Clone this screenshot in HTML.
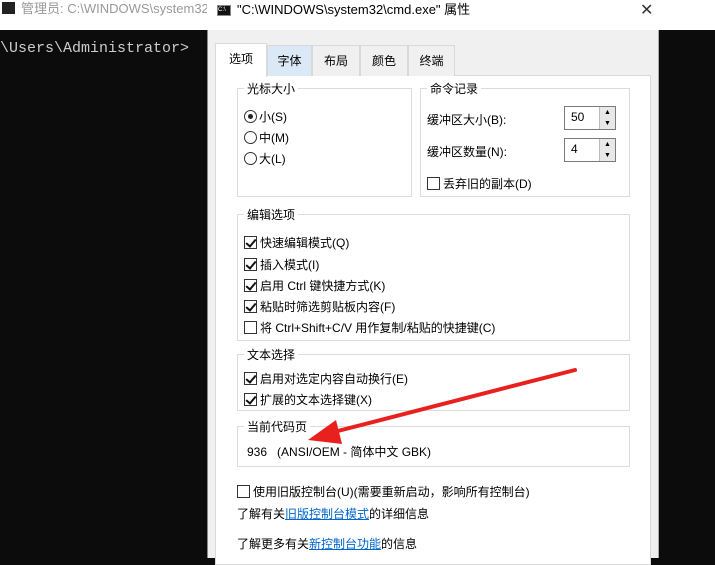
<!DOCTYPE html><html><head><meta charset="utf-8"><style>
*{margin:0;padding:0;box-sizing:border-box}
body{width:715px;height:558px;overflow:hidden;position:relative;background:#0c0c0c;font-family:"Liberation Sans","Noto Sans CJK SC",sans-serif;font-size:12px;color:#000}
.a{position:absolute;white-space:nowrap}
.gb{position:absolute;border:1px solid #dcdcdc}
.gl{position:absolute;top:-9px;left:6px;background:#fff;padding:0 3px;font-size:12px}
.cb{display:inline-block;width:13px;height:13px;border:1px solid #333;vertical-align:-2px;margin-right:3px;background:#fff;position:relative}
.cb.k:after{content:"";position:absolute;left:3px;top:0px;width:4px;height:8px;border:solid #111;border-width:0 2px 2px 0;transform:rotate(40deg)}
.rb{display:inline-block;width:13px;height:13px;border:1px solid #333;border-radius:50%;vertical-align:-2px;margin-right:2px;background:#fff;position:relative}
.rb.k:after{content:"";position:absolute;left:3px;top:3px;width:5px;height:5px;border-radius:50%;background:#222}
.tab{position:absolute;top:45px;height:31px;border:1px solid #d9d9d9;border-bottom:none;background:#f0f0f0;padding:6px 0;text-align:center;font-size:12px}
.sp{position:absolute;width:52px;height:24px;border:1px solid #7a7a7a;background:#fff;padding:3px 6px}
.sp i{position:absolute;right:0;width:16px;height:11px;background:#e8e8e8;border-left:1px solid #bbb;font-style:normal;font-size:7px;text-align:center;line-height:11px}
a{color:#0066cc;text-decoration:underline}
</style></head><body>
<div class="a" style="left:0;top:0;width:715px;height:30px;background:#fff"></div>
<div class="a" style="left:2px;top:2px;width:13px;height:12px;background:#222"></div>
<div class="a" style="left:21px;top:0;color:#999;font-size:13px;line-height:18px">管理员: C:\WINDOWS\system32\cm</div>
<div class="a" style="left:0;top:40px;color:#ccc;font-family:'Liberation Mono',monospace;font-size:15px">\Users\Administrator&gt;</div>
<div class="a" style="left:207px;top:0;width:452px;height:558px;background:#f0f0f0;border-left:1px solid #888;border-right:1px solid #aaa"></div>
<div class="a" style="left:207px;top:0;width:452px;height:30px;background:#fff"></div>
<div class="a" style="left:217px;top:5px;width:14px;height:11px;background:#111;border:1px solid #888;color:#fff;font-size:6px;line-height:9px">C:\</div>
<div class="a" style="left:237px;top:0;font-size:13px;line-height:20px">"C:\WINDOWS\system32\cmd.exe" 属性</div>
<div class="a" style="left:640px;top:0;font-size:16px;color:#333">✕</div>
<div class="a" style="left:215px;top:75px;width:436px;height:490px;background:#fff;border:1px solid #d9d9d9"></div>
<div class="tab" style="left:267px;background:#dbe9f7;width:45px">字体</div>
<div class="tab" style="left:312px;width:48px">布局</div>
<div class="tab" style="left:360px;width:48px">颜色</div>
<div class="tab" style="left:408px;width:47px">终端</div>
<div class="tab" style="left:215px;top:43px;height:34px;background:#fff;width:52px;z-index:2">选项</div>
<div class="gb" style="left:237px;top:88px;width:175px;height:109px"><span class="gl">光标大小</span>
<div class="a" style="left:6px;top:19px"><span class="rb k"></span>小(S)</div>
<div class="a" style="left:6px;top:40px"><span class="rb"></span>中(M)</div>
<div class="a" style="left:6px;top:61px"><span class="rb"></span>大(L)</div></div>
<div class="gb" style="left:420px;top:88px;width:210px;height:109px"><span class="gl">命令记录</span>
<div class="a" style="left:6px;top:22px">缓冲区大小(B):</div>
<div class="sp" style="left:143px;top:17px">50<i style="top:0">▲</i><i style="top:11px">▼</i></div>
<div class="a" style="left:6px;top:54px">缓冲区数量(N):</div>
<div class="sp" style="left:143px;top:49px">4<i style="top:0">▲</i><i style="top:11px">▼</i></div>
<div class="a" style="left:6px;top:86px"><span class="cb"></span>丢弃旧的副本(D)</div></div>
<div class="gb" style="left:237px;top:214px;width:393px;height:127px"><span class="gl">编辑选项</span>
<div class="a" style="left:6px;top:19px"><span class="cb k"></span>快速编辑模式(Q)</div>
<div class="a" style="left:6px;top:41px"><span class="cb k"></span>插入模式(I)</div>
<div class="a" style="left:6px;top:62px"><span class="cb k"></span>启用 Ctrl 键快捷方式(K)</div>
<div class="a" style="left:6px;top:83px"><span class="cb k"></span>粘贴时筛选剪贴板内容(F)</div>
<div class="a" style="left:6px;top:104px"><span class="cb"></span>将 Ctrl+Shift+C/V 用作复制/粘贴的快捷键(C)</div></div>
<div class="gb" style="left:237px;top:354px;width:393px;height:57px"><span class="gl">文本选择</span>
<div class="a" style="left:6px;top:15px"><span class="cb k"></span>启用对选定内容自动换行(E)</div>
<div class="a" style="left:6px;top:36px"><span class="cb k"></span>扩展的文本选择键(X)</div></div>
<div class="gb" style="left:237px;top:426px;width:393px;height:41px"><span class="gl">当前代码页</span>
<div class="a" style="left:9px;top:16px">936&nbsp;&nbsp;&nbsp;(ANSI/OEM - 简体中文 GBK)</div></div>
<div class="a" style="left:237px;top:483px"><span class="cb"></span>使用旧版控制台(U)(需要重新启动，影响所有控制台)</div>
<div class="a" style="left:237px;top:505px">了解有关<a>旧版控制台模式</a>的详细信息</div>
<div class="a" style="left:237px;top:535px">了解更多有关<a>新控制台功能</a>的信息</div>
<svg class="a" style="left:0;top:0" width="715" height="558"><line x1="575" y1="370" x2="330" y2="433" stroke="#e8201e" stroke-width="4" stroke-linecap="round"/><polygon points="308,440 336,420 342,444" fill="#e8201e"/></svg>
</body></html>
